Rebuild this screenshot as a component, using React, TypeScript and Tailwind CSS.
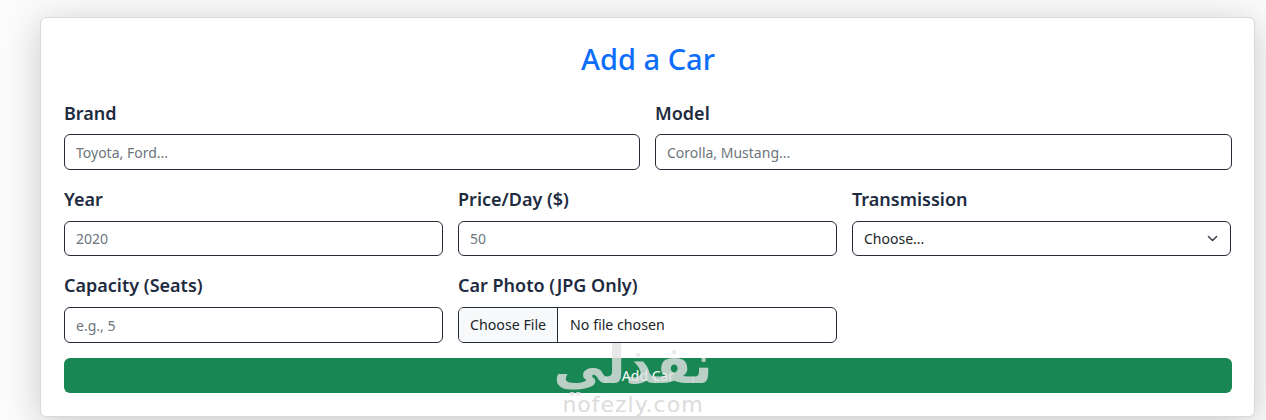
import React from 'react';

const labelClass = 'block text-[18px] leading-[22px] font-semibold text-[#1e2b3f]';
const inputClass =
  'block w-full px-[11px] text-[14px] text-[#212529] bg-white border border-[#252a37] rounded-[6px] placeholder:text-[#6c757d] outline-none';

const Field = ({ label, spacing = 'mb-[11px]', children }: { label: string; spacing?: string; children: React.ReactNode }) => (
  <div>
    <label className={`${labelClass} ${spacing}`}>{label}</label>
    {children}
  </div>
);

const App = () => {
  return (
    <div className="relative h-[420px] overflow-hidden bg-[#fbfbfb] pt-[17px] pl-[40px] pr-[11px] font-['Noto_Sans',sans-serif]">
      <div className="bg-white border border-[#d9d9d9] rounded-[6px] shadow-[0_6px_36px_rgba(0,0,0,0.2)] pl-[23px] pr-[22px] pt-[21px] pb-[23px]">
        <h2 className="text-center text-[29px] leading-[40px] font-medium text-[#0d6efd] mb-[23px]">Add a Car</h2>
        <form>
          <div className="grid grid-cols-[576px_1fr] gap-x-[15px] mb-[18px]">
            <Field label="Brand" spacing="mb-[10px]">
              <input className={`${inputClass} h-[36px]`} placeholder="Toyota, Ford..." />
            </Field>
            <Field label="Model" spacing="mb-[10px]">
              <input className={`${inputClass} h-[36px]`} placeholder="Corolla, Mustang..." />
            </Field>
          </div>
          <div className="grid grid-cols-[379px_379px_379px] gap-x-[15px] mb-[18px]">
            <Field label="Year">
              <input className={`${inputClass} h-[35px]`} placeholder="2020" />
            </Field>
            <Field label="Price/Day ($)">
              <input className={`${inputClass} h-[35px]`} placeholder="50" />
            </Field>
            <Field label="Transmission">
              <div className="relative">
                <select className={`${inputClass} h-[35px] appearance-none`} defaultValue="">
                  <option value="">Choose...</option>
                  <option>Automatic</option>
                  <option>Manual</option>
                </select>
                <svg className="absolute right-[13px] top-[12px] w-[11px] h-[11px] pointer-events-none" viewBox="0 0 16 16" fill="none" stroke="#343a40" strokeWidth="2" strokeLinecap="round" strokeLinejoin="round">
                  <path d="m2 5 6 6 6-6" />
                </svg>
              </div>
            </Field>
          </div>
          <div className="grid grid-cols-[379px_379px_379px] gap-x-[15px] mb-[15px]">
            <Field label="Capacity (Seats)">
              <input className={`${inputClass} h-[36px]`} placeholder="e.g., 5" />
            </Field>
            <Field label="Car Photo (JPG Only)">
              <input
                type="file"
                accept=".jpg"
                className="block w-full h-[36px] text-[14.2px] text-[#212529] bg-white border border-[#252a37] rounded-[6px] overflow-hidden file:h-full file:mr-[12px] file:px-[11px] file:bg-[#f8f9fa] file:border-0 file:border-r file:border-solid file:border-[#252a37] file:text-[14.2px] file:text-[#212529]"
              />
            </Field>
          </div>
          <button type="button" className="block w-full h-[35px] rounded-[6px] bg-[#198754] text-white text-[14px]">
            Add Car
          </button>
        </form>
      </div>
      {/* watermark */}
      <div className="absolute left-[533px] top-[338px] w-[200px] text-center text-[#e2e2e2]/80 pointer-events-none">
        <div dir="rtl" className="font-['DejaVu_Sans',sans-serif] font-bold text-[52px] leading-[55px]">نفذلي</div>
        <div className="font-['DejaVu_Sans',sans-serif] text-[22px] leading-[24px] tracking-[1px] text-[#dcdcdc]">nofezly.com</div>
      </div>
    </div>
  );
};

export default App;
